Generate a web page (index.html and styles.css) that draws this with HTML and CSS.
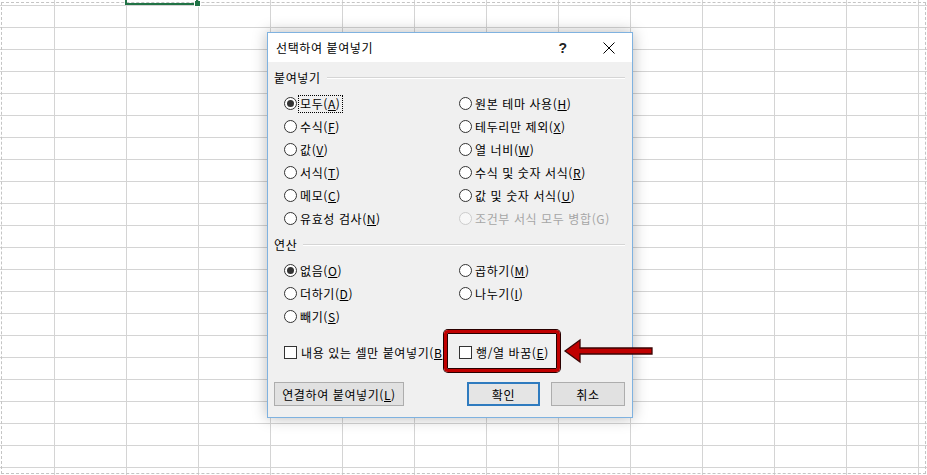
FILE: index.html
```html
<!DOCTYPE html>
<html lang="ko">
<head>
    <meta charset="UTF-8">
    <title>선택하여 붙여넣기</title>
    <link rel="stylesheet" href="styles.css">
</head>
<body>
<div class="sheet">
    <div class="copy-range"></div>
    <div class="active-cell"><span class="fill-handle"></span></div>

    <!-- Paste Special dialog -->
    <div class="dialog">
        <div class="titlebar">
            <span class="title">선택하여 붙여넣기</span>
            <span class="title-btn help">?</span>
            <span class="title-btn">
                <svg width="12" height="12" viewBox="0 0 12 12"><path d="M0.5 0.5 L11.5 11.5 M11.5 0.5 L0.5 11.5" stroke="#000" stroke-width="1"/></svg>
            </span>
        </div>
        <div class="dialog-body">
            <div class="group-title"><span>붙여넣기</span></div>
            <div class="options">
                <label class="opt"><span class="radio checked"></span><span class="focus">모두(<u>A</u>)</span></label>
                <label class="opt"><span class="radio"></span>원본 테마 사용(<u>H</u>)</label>
                <label class="opt"><span class="radio"></span>수식(<u>F</u>)</label>
                <label class="opt"><span class="radio"></span>테두리만 제외(<u>X</u>)</label>
                <label class="opt"><span class="radio"></span>값(<u>V</u>)</label>
                <label class="opt"><span class="radio"></span>열 너비(<u>W</u>)</label>
                <label class="opt"><span class="radio"></span>서식(<u>T</u>)</label>
                <label class="opt"><span class="radio"></span>수식 및 숫자 서식(<u>R</u>)</label>
                <label class="opt"><span class="radio"></span>메모(<u>C</u>)</label>
                <label class="opt"><span class="radio"></span>값 및 숫자 서식(<u>U</u>)</label>
                <label class="opt"><span class="radio"></span>유효성 검사(<u>N</u>)</label>
                <label class="opt disabled"><span class="radio"></span>조건부 서식 모두 병합(G)</label>
            </div>

            <div class="group-title"><span>연산</span></div>
            <div class="options">
                <label class="opt"><span class="radio checked"></span>없음(<u>O</u>)</label>
                <label class="opt"><span class="radio"></span>곱하기(<u>M</u>)</label>
                <label class="opt"><span class="radio"></span>더하기(<u>D</u>)</label>
                <label class="opt"><span class="radio"></span>나누기(<u>I</u>)</label>
                <label class="opt"><span class="radio"></span>빼기(<u>S</u>)</label>
            </div>

            <div class="options checks">
                <label class="opt clip"><span class="checkbox"></span>내용 있는 셀만 붙여넣기(<u>B</u>)</label>
                <label class="opt"><span class="checkbox"></span>행/열 바꿈(<u>E</u>)</label>
            </div>

            <div class="footer">
                <button class="btn wide">연결하여 붙여넣기(<u>L</u>)</button>
                <button class="btn default">확인</button>
                <button class="btn">취소</button>
            </div>
        </div>
    </div>

    <!-- annotation -->
    <div class="callout"></div>
    <svg class="arrow" width="94" height="26" viewBox="0 0 94 26">
        <polygon points="3,13 18,2 18,10 90,10 90,16 18,16 18,24" fill="#c00000" stroke="#3a0505" stroke-width="1.3" stroke-linejoin="miter"/>
    </svg>
</div>
</body>
</html>
```

FILE: styles.css
```css
body {
    margin: 0;
    font-family: "Noto Sans CJK KR", "Noto Sans", sans-serif;
    font-size: 12px;
    color: #000;
}

.sheet {
    position: relative;
    width: 927px;
    height: 475px;
    overflow: hidden;
    background-color: #fff;
    background-image:
        linear-gradient(to right, #d4d4d4 1px, transparent 1px),
        linear-gradient(to bottom, #d4d4d4 1px, transparent 1px);
    background-size: 72px 22px;
    background-position: 54px 27px;
}

.copy-range {
    position: absolute;
    left: 1px;
    top: 2px;
    width: 923px;
    height: 470px;
    border: 1px dashed #c4c4c4;
}

.active-cell {
    position: absolute;
    left: 125px;
    top: -20px;
    width: 69px;
    height: 21px;
    border: 2px solid #217346;
}

.fill-handle {
    position: absolute;
    right: -5px;
    bottom: -4px;
    width: 5px;
    height: 5px;
    background: #217346;
    border: 1px solid #fff;
    border-top: none;
}

.dialog {
    position: absolute;
    left: 267px;
    top: 32px;
    width: 364px;
    border: 1px solid #7fb2e0;
    background: #f0f0f0;
    box-shadow: 0 0 14px rgba(0, 0, 0, 0.28);
    letter-spacing: 0.6px;
}

.titlebar {
    display: flex;
    align-items: center;
    height: 29px;
    background: #fff;
}

.title {
    flex: 1;
    padding-left: 8px;
    line-height: 16px;
}

.title-btn {
    width: 46px;
    height: 29px;
    display: flex;
    align-items: center;
    justify-content: center;
}

.help {
    font-family: "Liberation Sans", Arial, sans-serif;
    font-size: 14px;
    font-weight: bold;
    color: #222;
}

.dialog-body {
    padding: 8px 7px 11px 6px;
}

.group-title {
    display: flex;
    align-items: center;
    gap: 6px;
    height: 16px;
    line-height: 16px;
}

.group-title::after {
    content: "";
    flex: 1;
    height: 1px;
    background: #d5d5d5;
    border-bottom: 1px solid #fff;
}

.options {
    display: grid;
    grid-template-columns: 175px 175px;
    grid-auto-rows: 23px;
    padding-left: 10px;
    margin: 6px 0 7px;
}

.opt {
    display: flex;
    align-items: center;
    line-height: 16px;
    white-space: nowrap;
}

.opt u {
    text-underline-offset: 1px;
}

.radio {
    position: relative;
    width: 11px;
    height: 11px;
    border: 1px solid #333;
    border-radius: 50%;
    background: #fff;
    margin-right: 3px;
    flex: none;
}

.radio.checked::after {
    content: "";
    position: absolute;
    left: 2px;
    top: 2px;
    width: 7px;
    height: 7px;
    border-radius: 50%;
    background: #333;
}

.opt.disabled {
    color: #a6a6a6;
}

.opt.disabled .radio {
    border-color: #cccccc;
    background: #f7f7f7;
}

.focus {
    outline: 1px dotted #000;
    outline-offset: 0;
    padding: 0 1px;
    margin-left: -1px;
}

.checks {
    margin-top: 13px;
    margin-bottom: 18px;
}

.checkbox {
    width: 11px;
    height: 11px;
    border: 1px solid #333;
    background: #fff;
    margin-right: 4px;
    flex: none;
}

.opt.clip {
    overflow: hidden;
    width: 164px;
}

.footer {
    display: flex;
    gap: 11px;
}

.btn {
    height: 24px;
    padding: 0;
    font-family: inherit;
    font-size: 12px;
    letter-spacing: 0.6px;
    color: #000;
    background: #e1e1e1;
    border: 1px solid #adadad;
    width: 74px;
}

.btn.wide {
    width: 130px;
    margin-right: auto;
}

.btn.default {
    width: 73px;
    border: 2px solid #2f7bbf;
    background: #e5e5e5;
}

.callout {
    position: absolute;
    left: 444px;
    top: 330px;
    width: 110px;
    height: 36px;
    border: 3px solid #c00000;
    border-radius: 4px;
    box-shadow: 0 0 0 1px #2a0000, inset 0 0 0 1px #2a0000;
}

.arrow {
    position: absolute;
    left: 562px;
    top: 338px;
}
```
